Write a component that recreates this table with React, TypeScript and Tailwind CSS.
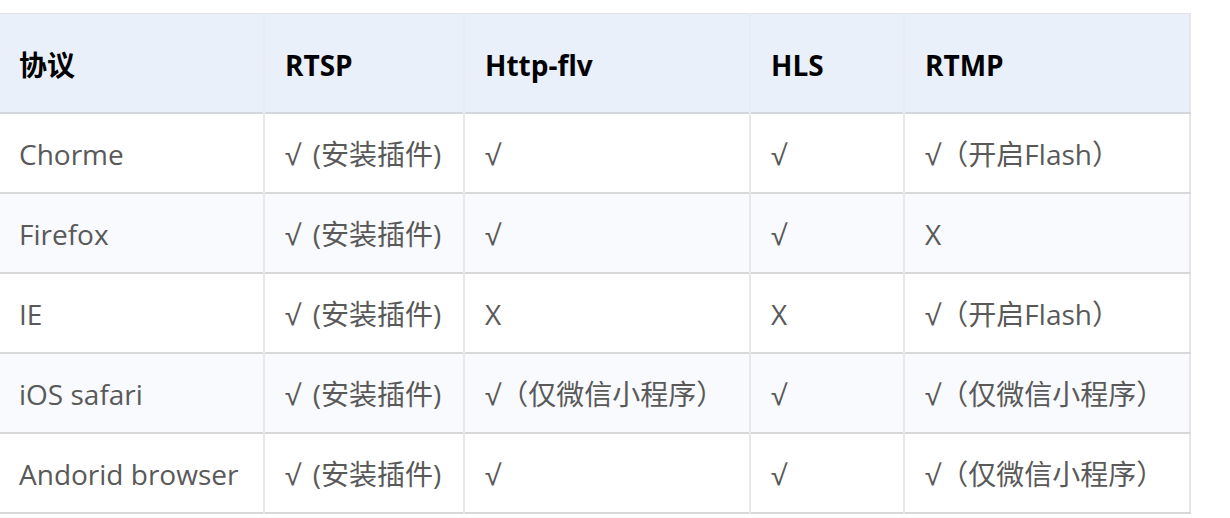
const rows = [
  ["Chorme", "√ (安装插件)", "√", "√", "√（开启Flash）"],
  ["Firefox", "√ (安装插件)", "√", "√", "X"],
  ["IE", "√ (安装插件)", "X", "X", "√（开启Flash）"],
  ["iOS safari", "√ (安装插件)", "√（仅微信小程序）", "√", "√（仅微信小程序）"],
  ["Andorid browser", "√ (安装插件)", "√", "√", "√（仅微信小程序）"],
];

const headers = ["协议", "RTSP", "Http-flv", "HLS", "RTMP"];

export default function App() {
  return (
    <div
      className="h-[518px] w-[1230px] overflow-hidden bg-white pt-[13px]"
      style={{ fontFamily: '"Open Sans", "Noto Sans CJK SC", sans-serif' }}
    >
      <table className="w-[1190px] table-fixed border-collapse border-t border-r-2 border-t-[#e3e3e3] border-r-[#e6e6e6] text-[28px]">
        <colgroup>
          <col className="w-[264px]" />
          <col className="w-[200px]" />
          <col className="w-[286px]" />
          <col className="w-[154px]" />
          <col className="w-[286px]" />
        </colgroup>
        <thead>
          <tr className="h-[99px] border-b-2 border-[#d3d6da] bg-[#e9f0f9]">
            {headers.map((h, i) => (
              <th
                key={h}
                className={`pl-[19px] pt-1 text-left font-bold text-black ${i > 0 ? "border-l-2 border-l-[#e6ecf3] pl-[20px]" : ""}`}
              >
                {h}
              </th>
            ))}
          </tr>
        </thead>
        <tbody>
          {rows.map((r, ri) => (
            <tr
              key={r[0]}
              className={`h-[80px] border-b-2 border-[#d8d8d8] ${ri % 2 === 1 ? "bg-[#f8fafd]" : "bg-white"}`}
            >
              {r.map((c, ci) => (
                <td
                  key={ci}
                  className={`whitespace-nowrap pl-[19px] pt-0.5 text-[#595959] ${ci > 0 ? "border-l-2 border-l-[#e8e8e8] pl-[20px]" : ""} ${ci === 1 ? "[word-spacing:5px]" : ""}`}
                >
                  {c}
                </td>
              ))}
            </tr>
          ))}
        </tbody>
      </table>
    </div>
  );
}
